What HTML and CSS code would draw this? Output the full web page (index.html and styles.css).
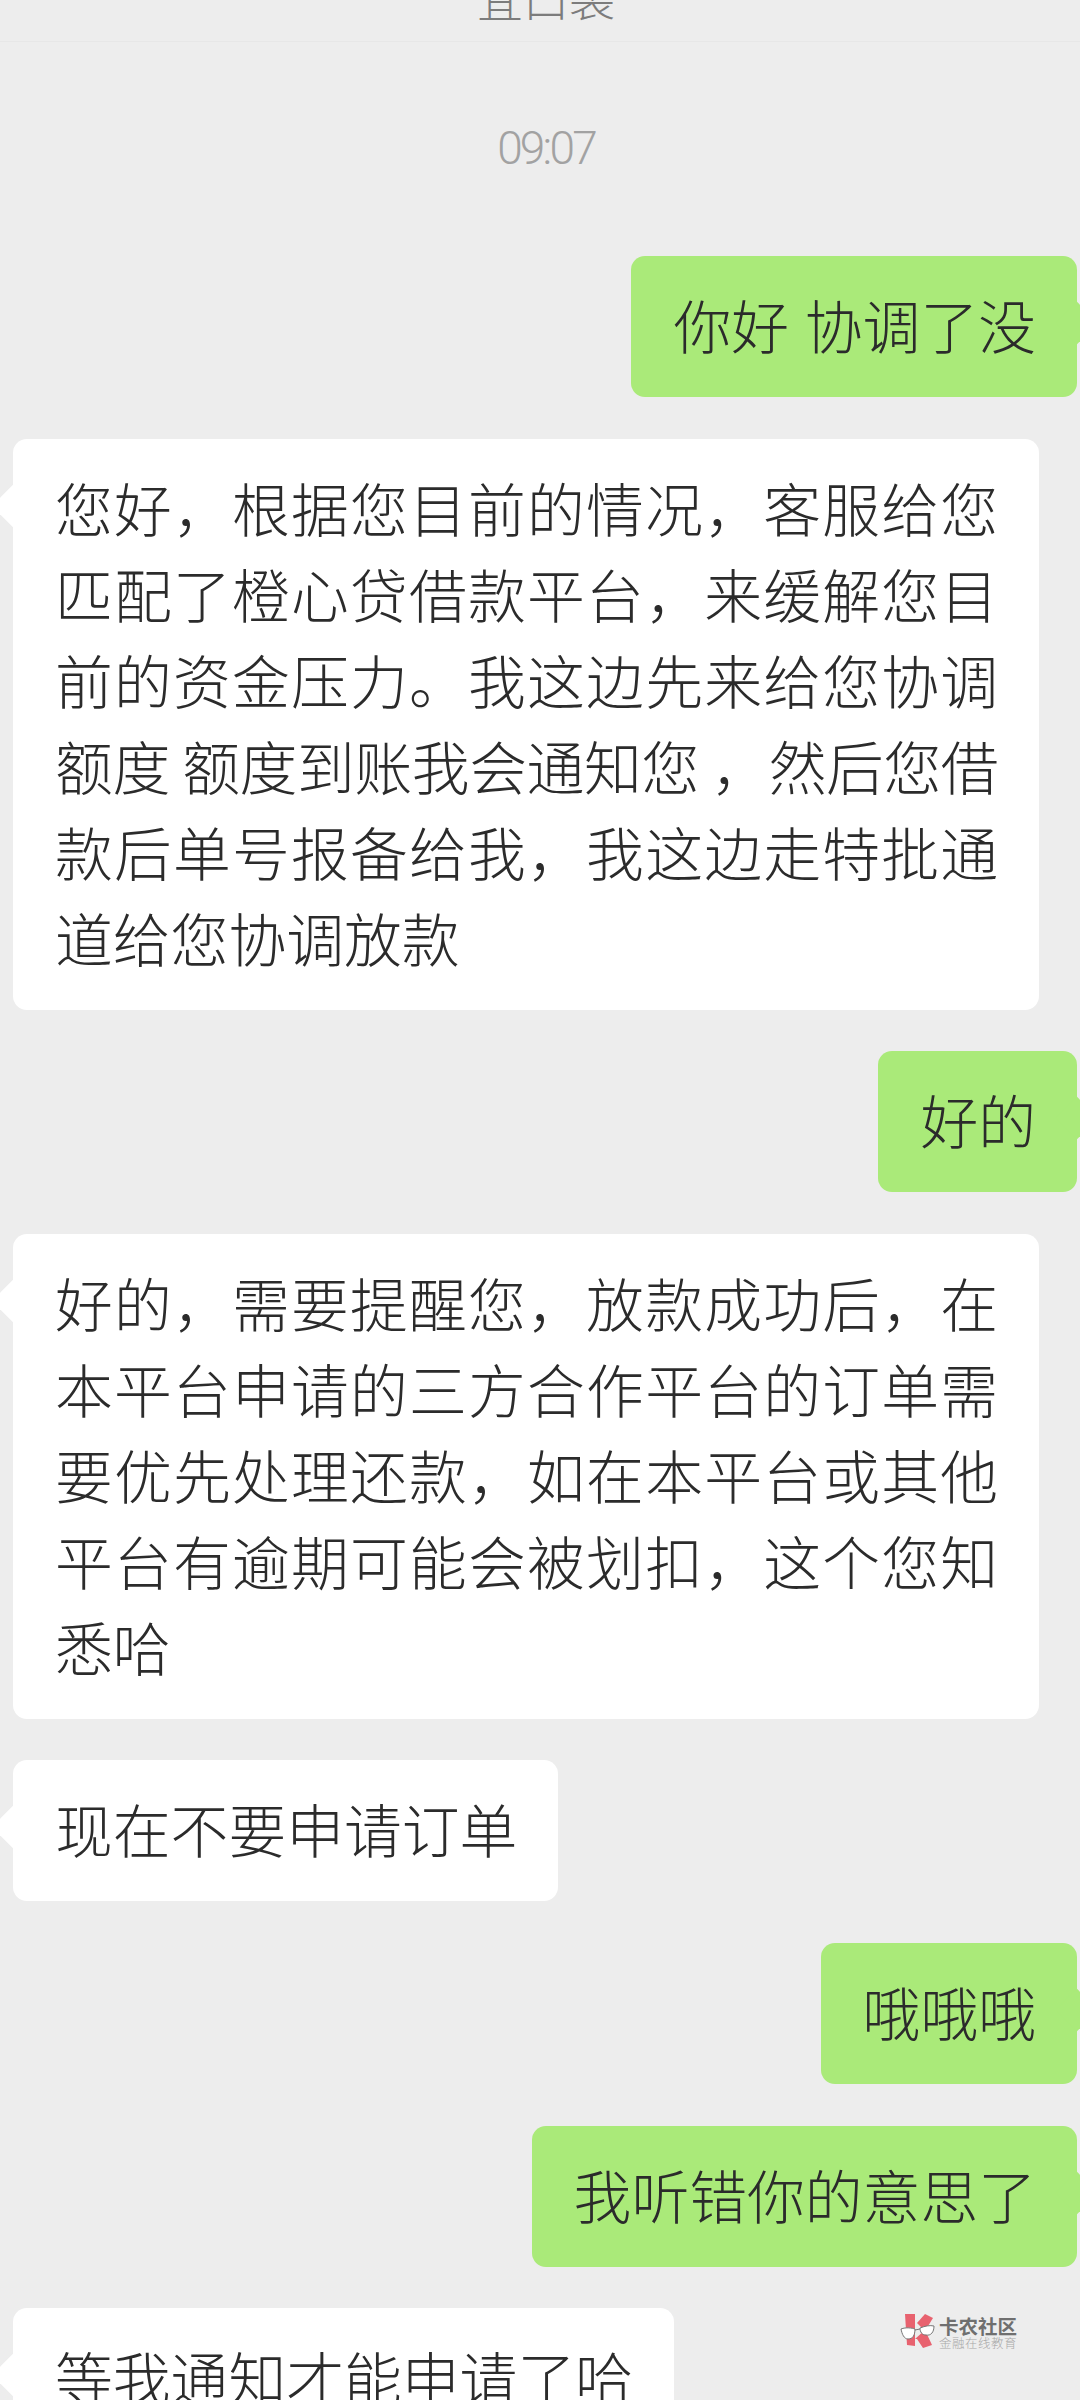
FILE: index.html
```html
<!DOCTYPE html>
<html lang="zh-CN">
<head>
  <meta charset="UTF-8" />
  <meta name="viewport" content="width=device-width, initial-scale=1.0" />
  <title>宜口袋</title>
  <link rel="stylesheet" href="styles.css">
</head>
<body>
  <header class="topbar"><span>宜口袋</span></header>

  <div class="time">09:07</div>

  <main class="chat">
    <div class="msg me">你好 协调了没</div>
    <div class="msg them">您好，根据您目前的情况，客服给您匹配了橙心贷借款平台，来缓解您目前的资金压力。我这边先来给您协调<span class="tight">额度 额度到账我会通知您 ，然后您借</span>款后单号报备给我，我这边走特批通道给您协调放款</div>
    <div class="msg me">好的</div>
    <div class="msg them">好的，需要提醒您，放款成功后，在本平台申请的三方合作平台的订单需要优先处理还款，如在本平台或其他平台有逾期可能会被划扣，这个您知悉哈</div>
    <div class="msg them">现在不要申请订单</div>
    <div class="msg me">哦哦哦</div>
    <div class="msg me">我听错你的意思了</div>
    <div class="msg them">等我通知才能申请了哈</div>
  </main>

  <!-- Watermark -->
  <div class="watermark">
    <svg class="wm-logo" width="36" height="36" viewBox="0 0 36 36">
      <path d="M5 1H15V33L7 32Z" fill="#e8626f"/>
      <path d="M17 10L25 1L33 5L25 18Z" fill="#e8626f"/>
      <path d="M15 26L25 17L32 32L23 35L17 26Z" fill="#e8626f"/>
      <path d="M1 16C6 14 12 15 15 16C15 22 13 26 8 26C4 26 2 21 1 16Z" fill="#fff" stroke="#777" stroke-width="1"/>
      <path d="M20 15C25 13 30 12 34 13C34 19 31 23 26 22C22 22 20 19 20 15Z" fill="#fff" stroke="#777" stroke-width="1"/>
      <path d="M15 17L20 16" stroke="#777" stroke-width="1"/>
    </svg>
    <div class="wm-text">
      <div class="wm-name">卡农社区</div>
      <div class="wm-sub">金融在线教育</div>
    </div>
  </div>
</body>
</html>
```

FILE: styles.css
```css
html, body { margin: 0; height: 2400px; overflow: hidden; }
body {
  position: relative;
  width: 1080px;
  background: #ededed;
  font-family: "Noto Sans CJK SC", "Noto Sans", sans-serif;
  font-weight: 300;
}

.topbar {
  box-sizing: border-box;
  height: 42px;
  padding: 0 0 20px 12px;
  display: flex;
  justify-content: center;
  align-items: flex-end;
  overflow: hidden;
  border-bottom: 1px solid #e7e7e7;
  color: #7c7c7c;
  font-size: 46px;
  line-height: 48px;
}

.time {
  margin: 82px 0 84px;
  padding-left: 12px;
  text-align: center;
  font-family: Roboto, sans-serif;
  font-weight: 300;
  font-size: 46px;
  letter-spacing: -2.8px;
  line-height: 48px;
  color: #a2a2a2;
}

.chat { display: flex; flex-direction: column; gap: 41.6px; }

.msg {
  position: relative;
  padding: 25px 41px 30px 42px;
  font-size: 57.8px;
  line-height: 86px;
  color: #2b2b2b;
  border-radius: 14px;
}
.msg::before {
  content: "";
  position: absolute;
  top: 52px;
  width: 30px;
  height: 30px;
  background: inherit;
  transform: rotate(45deg);
}

.them {
  align-self: flex-start;
  max-width: 943px;
  margin-left: 13px;
  background: #fff;
  text-align: justify;
}
.them::before { left: -15px; }
.tight { letter-spacing: -.65px; }

.me {
  align-self: flex-end;
  margin-right: 3px;
  background: #aaea79;
  word-spacing: 3px;
}
.me::before { right: -15px; }

/* Watermark sits over the chat */
.watermark {
  position: absolute;
  left: 900px;
  top: 2313px;
  display: flex;
  gap: 3px;
}
.wm-name {
  margin-top: 3px;
  font-size: 19.5px;
  font-weight: 700;
  line-height: 20px;
  color: #6f6f6f;
}
.wm-sub {
  font-size: 12.5px;
  line-height: 13px;
  letter-spacing: .5px;
  color: #a8a8a8;
}
```
